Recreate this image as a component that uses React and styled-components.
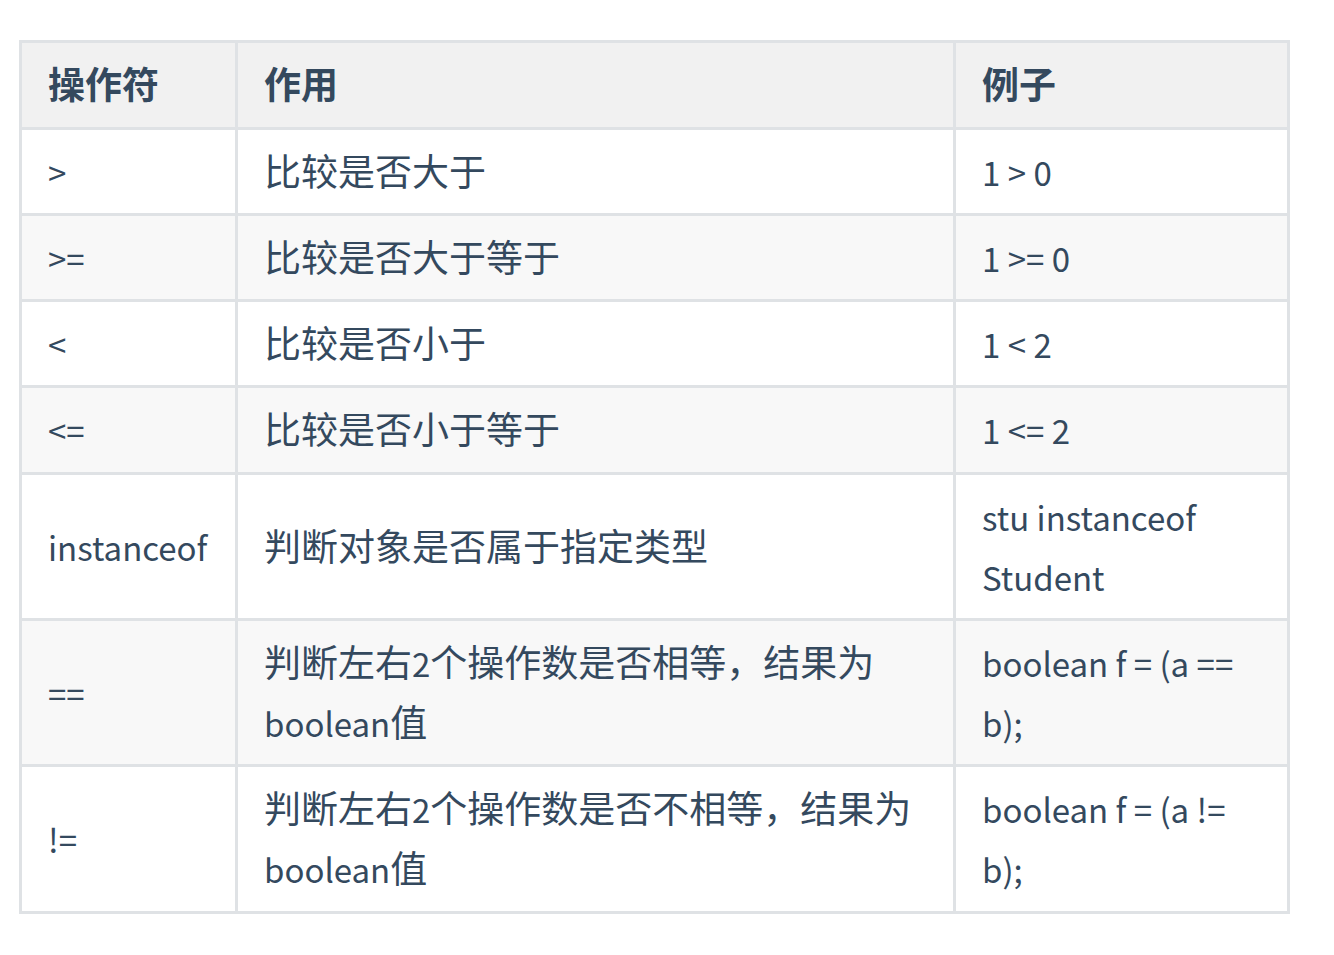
import React from 'react'
import styled, { createGlobalStyle } from 'styled-components'

const GlobalStyle = createGlobalStyle`
  body {
    margin: 0;
    background: #fff;
    font-family: "Noto Sans CJK SC", "Noto Sans", sans-serif;
  }
`

const rows = [
  ['>', '比较是否大于', '1 > 0'],
  ['>=', '比较是否大于等于', '1 >= 0'],
  ['<', '比较是否小于', '1 < 2'],
  ['<=', '比较是否小于等于', '1 <= 2'],
  ['instanceof', '判断对象是否属于指定类型', 'stu instanceof Student'],
  ['==', '判断左右2个操作数是否相等，结果为boolean值', 'boolean f = (a == b);'],
  ['!=', '判断左右2个操作数是否不相等，结果为boolean值', 'boolean f = (a != b);'],
]

// latin runs are set a touch smaller than the CJK glyphs
const Mixed = ({ text }) =>
  text.split(/([\x00-\x7F]+)/).filter(Boolean).map((part, i) =>
    /^[\x00-\x7F]+$/.test(part) ? <Latin key={i}>{part}</Latin> : <span key={i}>{part}</span>
  )

const App = () => {
  return (
    <Page>
      <GlobalStyle />
      <Table>
        <colgroup>
          <col style={{ width: 216 }} />
          <col style={{ width: 718 }} />
          <col />
        </colgroup>
        <thead>
          <tr>
            <Th>操作符</Th>
            <Th>作用</Th>
            <Th>例子</Th>
          </tr>
        </thead>
        <tbody>
          {rows.map((row, i) => (
            <Row key={i} $striped={i % 2 === 1}>
              {row.map((cell, j) => (
                <Td key={j}><Mixed text={cell} /></Td>
              ))}
            </Row>
          ))}
        </tbody>
      </Table>
    </Page>
  )
}

const Page = styled.main`
  padding: 40px 0 0 19px;
`

const Table = styled.table`
  width: 1271px;
  border-collapse: collapse;
  table-layout: fixed;
  color: #34495e;
  font-size: 37px;
  line-height: 60px;
`

const Latin = styled.span`
  font-size: 33px;
  line-height: 1;
`

const Th = styled.th`
  text-align: left;
  font-weight: 700;
  background: #f1f1f1;
  border: 3px solid #dfe2e5;
  padding: 9.5px 26px 14px;
`

const Row = styled.tr`
  background: ${(p) => (p.$striped ? '#f8f8f8' : '#fff')};
`

const Td = styled.td`
  border: 3px solid #dfe2e5;
  padding: 10px 26px 13.3px;
  vertical-align: middle;
`

export default App
